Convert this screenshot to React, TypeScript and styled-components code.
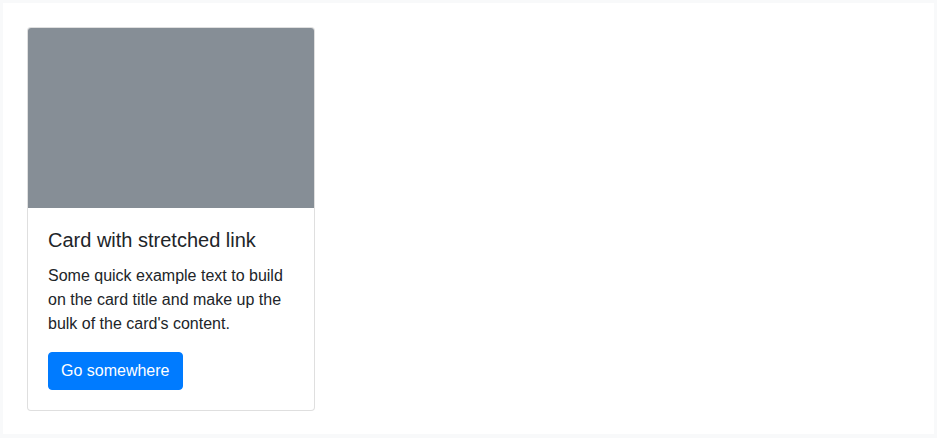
import React from 'react';
import styled, { createGlobalStyle } from 'styled-components';

const GlobalStyle = createGlobalStyle`
  html, body {
    margin: 0;
    padding: 0;
    background: #ffffff;
  }
  body {
    font-family: "Liberation Sans", Arial, sans-serif;
    font-size: 16px;
    line-height: 1.5;
    color: #212529;
  }
  * {
    box-sizing: border-box;
  }
`;

const Frame = styled.div`
  width: 937px;
  height: 438px;
  border: 3px solid #f8f9fa;
  border-bottom-width: 4px;
  padding: 24px;
  background: #fff;
`;

const Card = styled.div`
  position: relative;
  width: 288px;
  display: flex;
  flex-direction: column;
  background: #fff;
  border: 1px solid rgba(0, 0, 0, 0.125);
  border-radius: 4px;
  overflow: hidden;
`;

const CardImage = styled.div`
  height: 180px;
  background-color: #868e96;
`;

const CardBody = styled.div`
  padding: 20px;
`;

const CardTitle = styled.h5`
  margin: 0 0 12px;
  font-size: 20px;
  font-weight: 500;
  line-height: 1.2;
`;

const CardText = styled.p`
  margin: 0 0 16px;
`;

const Button = styled.a`
  display: inline-block;
  padding: 6px 12px;
  font-size: 16px;
  line-height: 24px;
  color: #fff;
  background-color: #007bff;
  border: 1px solid #007bff;
  border-radius: 4px;
  text-decoration: none;

  &::after {
    content: '';
    position: absolute;
    inset: 0;
    z-index: 1;
  }
`;

export default function App() {
  return (
    <>
      <GlobalStyle />
      <Frame>
        <Card>
          <CardImage />
          <CardBody>
            <CardTitle>Card with stretched link</CardTitle>
            <CardText>
              Some quick example text to build on the card title and make up the bulk of the card's content.
            </CardText>
            <Button href="#">Go somewhere</Button>
          </CardBody>
        </Card>
      </Frame>
    </>
  );
}
